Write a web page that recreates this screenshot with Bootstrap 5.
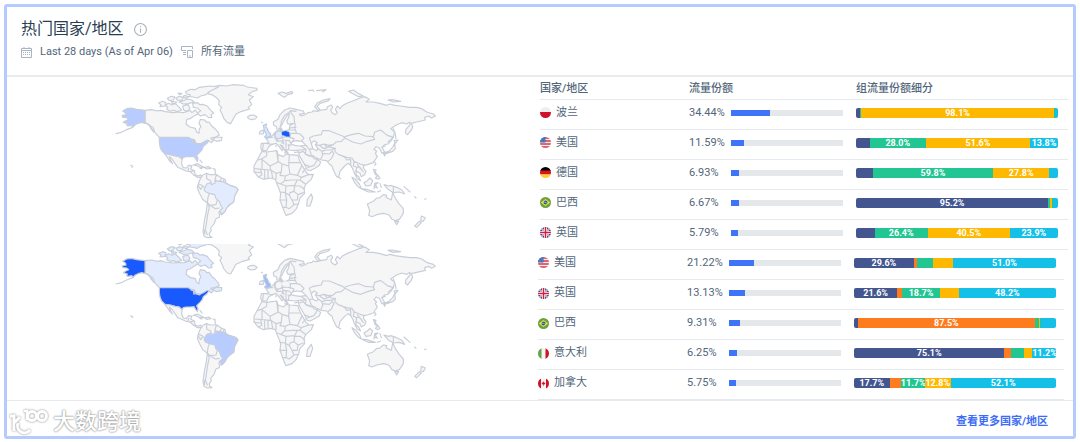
<!DOCTYPE html>
<html lang="zh-CN">
<head>
<meta charset="utf-8">
<meta name="viewport" content="width=device-width, initial-scale=1">
<title>热门国家/地区</title>
<link href="https://cdn.jsdelivr.net/npm/bootstrap@5.3.0/dist/css/bootstrap.min.css" rel="stylesheet">
<style>
  body { font-family: Roboto, "Noto Sans CJK SC", sans-serif; font-size: 11px; line-height: 16px; color: #52667a; background: #fff; }
  .panel { margin: 4px; border: 3px solid #b5cbff; border-radius: 3px; }
  .panel-head { height: 70px; padding: 10px 14px 0; border-bottom: 2px solid #e9ecef; }
  .panel-title { font-size: 16px; line-height: 24px; font-weight: 400; color: #2a3e52; }
  .title-row { gap: 10px; margin-bottom: 3px; }
  .period { gap: 8px; }
  .maps { padding: 1px 0 0 103px; }
  .world { display: block; width: 330px; max-width: 100%; }
  .world-a { --us: #b8ccff; --br: #e3ebff; --de: #dfe9ff; --gb: #dbe6fb; --pl: #195afe; --ca: #f6f6f7; }
  .world-b { --us: #195afe; --br: #b8ccff; --de: #f6f6f7; --gb: #a1b9f5; --pl: #f6f6f7; --ca: #e3ebff; }
  .tables { width: 533px; }
  .share-table { table-layout: fixed; width: 528px; margin: 0; }
  .share-table.compare { width: 526px; margin-left: -2px; }
  .share-table th, .share-table td { padding: 0 0 3px; height: 30px; border-bottom: 1px solid #e6eaee; vertical-align: middle; color: #52667a; }
  .share-table thead th { height: 22px; padding: 2px 0 0; font-weight: 500; }
  .share-table tbody th { font-weight: 400; }
  .col-name { width: 149px; }
  .col-share { width: 167px; }
  .country { gap: 5px; }
  .flag { width: 11px; height: 11px; flex: none; }
  .pct { width: 42px; flex: none; }
  .meter { height: 6px; width: 112px; border-radius: 0; background: #e5e8eb; }
  .meter .progress-bar { background: #3f73f8; }
  .split { height: 10px; width: 202px; border-radius: 2px; font-size: 9px; font-weight: 700; }
  .split .progress-bar { overflow: visible; }
  .c1 { background: #44568f; } .c2 { background: #ff7c1e; } .c3 { background: #22c692; } .c4 { background: #ffb800; } .c5 { background: #14c0e8; }
  .panel-foot { height: 36px; padding: 0 25px 0 1px; border-top: 1px solid #e6eaee; }
  .more { font-weight: 700; color: #3e6df5; text-decoration: none; margin-top: 7px; }
  .brandmark { font-size: 22px; line-height: 28px; font-weight: 500; color: #fff; text-shadow: 0 0 2px #8b8b8b, 0 0 2px #aaa; margin-top: 6px; }
  .brandmark svg { filter: drop-shadow(0 0 1px #888); }
</style>
</head>
<body>
<svg width="0" height="0" class="position-absolute" aria-hidden="true">
  <symbol id="world" viewBox="0 0 990 498">
    <g fill="#f6f6f7" stroke="#c8ced8" stroke-width="3.500" stroke-linejoin="round" stroke-linecap="round">
      <!-- Greenland, Iceland, Arctic -->
      <path d="M283 28 300 28 330 22 350 24 370 20 400 22 412 27 440 31 442 36 425 42 415 50 430 56 418 66 425 80 415 88 419 93 395 100 378 108 370 122 362 137 352 134 342 122 336 108 330 96 335 88 326 80 328 68 318 58 306 50 294 48 298 40 286 36Z M413 116 420 112 432 111 441 117 436 123 424 125 414 121Z"/>
      <g fill="var(--ca)">
        <path d="M226 42 242 34 256 35 268 28 300 24 326 27 312 34 296 42 288 50 272 54 262 60 250 57 238 56 241 50 230 48Z M165 82 176 76 186 81 196 77 206 86 215 96 200 101 192 97 180 99 170 94 173 88Z M146 75 158 70 168 74 165 84 150 86 153 80Z M172 61 184 55 195 57 190 66 178 68Z M198 60 208 55 220 58 216 66 203 67Z M207 72 220 68 232 63 246 66 252 72 235 77 220 78Z M248 76 262 74 270 80 278 79 292 84 300 95 311 105 303 110 306 118 296 119 285 110 272 114 261 106 272 98 262 90 250 88Z M218 84 234 80 240 90 233 100 221 96Z M184 70 200 72 196 77 186 76Z M222 52 236 56 230 61 220 58Z M240 104 254 107 248 113 240 110Z M204 45 216 47 208 50Z"/>
        <path d="M105 97 125 95 142 99 152 97 166 101 190 104 205 102 220 104 232 100 240 97 246 104 256 96 264 107 252 114 240 122 231 124 228 138 240 147 256 151 260 162 267 166 268 153 273 146 267 136 271 124 284 126 290 133 297 132 306 145 315 152 325 164 328 172 316 177 302 180 306 185 318 177 336 178 334 187 320 190 312 186 304 194 297 188 278 196 262 200 254 190 236 180 148 178 140 170 134 162 129 148 120 143 114 138 105 134Z"/>
      </g>
      <!-- United States -->
      <g fill="var(--us)">
        <path d="M148 178H235L243 183 252 184 256 196 270 198 280 193 292 186 297 188 290 197 280 205 276 215 270 222 260 232 264 242 262 250 257 243 252 235 240 236 228 236 220 238 216 244 207 236 195 234 180 230 165 228 155 218 150 206 148 192Z"/>
        <path d="M38 99 50 92 64 90 80 94 105 97V136L96 133 84 136 76 140 68 148 66 142 54 144 50 142 52 137 40 133 47 128 56 124 50 119 39 118 36 113 48 110 47 105Z"/>
        <path fill="none" d="M68 148 50 155 34 163 18 167M105 134 118 142 123 152 132 163M114 140 122 147 130 158M62 262 68 265 66 268"/>
        <path stroke-width="5" d="M243 184 255 188M252 197 251 188M261 197 269 199"/>
      </g>
      <!-- Mexico, Central America, Caribbean -->
      <path d="M165 228 180 230 195 234 207 236 216 244 215 258 220 269 230 270 236 262 246 263 242 272 252 278 256 290 265 294 272 290 276 298 262 298 250 290 240 281 228 279 215 273 203 268 195 256 185 242 178 236 182 248 188 257 180 250 172 238Z M236 271 234 279M242 280 254 278 M250 261 262 257 275 264 284 268 270 268 258 262Z M284 269 296 266 303 271 290 273Z M270 246 276 254M270 271 276 272M309 272 315 273 316 288"/>
      <!-- South America -->
      <path d="M272 300 280 290 290 286 300 290 320 290 335 300 345 304 348 316 360 322 378 328 384 335 374 354 371 372 360 380 350 390 345 400 336 410 329 408 328 418 318 422 312 438 302 450 304 458 298 466 299 474 306 478 292 479 282 474 279 460 283 430 289 400 292 375 278 364 268 345 262 330 266 314Z"/>
      <path fill="none" d="M290 286 290 302 302 308 304 316M266 318 276 322 284 329M264 322 272 334 278 324M298 346 294 358 292 374 300 382 318 380 322 366M292 375 298 388 293 410 289 438 286 456 292 470M300 382 316 392 328 390M326 406 329 400M320 290 315 302 320 312M335 301 329 310M342 304 340 313M283 456 284 468"/>
      <path fill="var(--br)" d="M290 318 302 314 304 320 316 314 314 308 330 310 342 312 348 316 360 322 378 328 384 335 374 354 371 372 358 380 350 390 345 400 336 408 328 400 338 390 332 382 328 370 318 362 314 350 298 346 286 341 282 334Z"/>
      <g transform="translate(420)">
        <!-- Eurasia -->
        <path d="M80 146 71 142 70 132 84 124 90 110 104 96 120 90 138 94 160 99 163 106 148 109 154 114 164 110 174 104 186 102 190 98 200 100 215 96 230 94 232 86 244 81 248 88 242 96 246 104 256 110 262 104 256 94 262 84 270 92 276 84 290 76 310 68 330 60 345 56 358 64 348 72 370 72 390 76 410 82 420 78 435 82 450 84 480 88 500 88 515 92 530 102 550 108 556 114 545 120 536 114 524 118 526 126 500 132 484 136 488 146 484 156 472 170 466 164 468 154 480 140 480 132 470 138 455 134 440 140 422 152 434 162 430 178 422 190 414 198 404 200 396 208 404 222 396 226 388 210 378 206 372 214 380 220 376 226 382 236 370 254 352 260 342 262 340 270 348 280 344 290 334 296 330 286 318 280 318 290 326 296 332 308 322 302 314 288 308 272 302 262 294 256 284 264 270 280 266 298 260 296 250 276 246 264 238 258 230 248 214 246 200 240 186 232 192 242 202 244 212 252 208 262 196 270 180 278 172 276 164 260 150 236 144 222 147 216 134 218 116 216 106 214 114 224 104 218 98 204 90 200 100 212 96 218 88 206 78 196 66 199 56 206 50 218 36 218 32 210 34 196 50 196 56 192 48 182 60 178 72 168 76 162 82 160 80 150Z"/>
        <!-- seas -->
        <path fill="#fff" d="M92 156 90 146 96 140 104 124 112 112 118 106 116 118 110 130 114 138 134 136 120 142 118 154 104 160Z M86 152 94 150 98 160 90 158Z M122 198 128 190 140 188 156 190 168 202 150 204 134 202Z M184 196 192 188 202 194 196 200 204 212 200 218 190 214 186 204Z"/>
        <!-- borders -->
        <path fill="none" d="M92 146 94 130 104 112 116 104 122 98 138 100M122 98 124 106 132 116 134 134M118 150 138 148M116 156 134 156M136 138 134 150 140 166 122 166M140 166 150 168 162 180 154 190M122 166 120 178 132 182 128 192M72 168 76 182 82 190M76 162 75 172 84 182 96 178 112 176 122 180M84 182 80 190 98 188 102 198M96 178 100 186 118 188 122 194M60 178 68 178M50 196 68 200M40 198 38 216M98 188 96 196M108 188 108 210M114 200 122 202M116 202 116 214"/>
        <path fill="none" d="M184 196 178 180 190 174 214 170 218 158 238 158 262 168 278 174 285 180 274 190 258 192 250 200 236 202 222 198 208 202 196 200M285 176 304 170 326 166 345 174 370 176 374 184 352 190 332 198 308 192 285 180M370 176 374 162 392 156 412 172 430 178 414 192M250 200 236 206 256 212 254 220 266 230 290 238 306 240 312 250 330 258 344 262M204 212 216 220 218 232 212 244M216 220 228 216 246 216 256 210M218 226 238 228 246 220 252 226 244 242 234 250M168 202 178 214 188 212M168 214 166 228 184 234M178 214 184 230M152 204 168 214 150 216M148 224 160 220 168 230 184 236M174 268 192 262 202 246M164 260 176 264M286 240 290 246 302 244 302 260M312 250 310 264 320 268 318 280M322 260 332 272 340 282M322 268 328 266 336 276M396 208 406 204M208 202 222 212 238 206M222 198 232 208M270 230 288 240"/>
        <!-- Africa -->
        <path d="M36 220 50 222 80 218 84 230 100 236 108 228 120 230 144 232 148 246 156 262 168 282 176 290 190 289 184 304 168 318 162 330 164 346 150 360 146 376 138 394 126 406 108 412 104 404 98 388 90 366 92 346 86 330 80 316 76 304 62 300 40 304 24 296 12 280 12 264 22 246 30 230Z"/>
        <path fill="none" d="M50 222 50 234 32 244 22 246M36 244 60 264 84 252 80 218M84 230 84 250 96 258 116 264 118 230M116 254 148 254M36 244 36 274 14 272M36 274 62 276 60 264M62 276 78 286 94 282 96 258M94 282 90 292 106 294 120 288 116 264M120 288 142 292 156 262M142 292 154 298 176 290M154 298 150 306 166 318M106 294 104 308 92 318 82 314M150 306 142 306 126 306 104 308M92 318 108 324 106 344 90 342M108 324 134 322 142 306M134 322 132 340 120 344 118 352 106 344M132 324 150 324 164 334M132 340 144 350 142 366 126 366 118 352M106 344 110 366 90 366M110 366 108 388 98 388M108 388 118 392 132 380 126 366M132 380 146 378M144 350 160 344M78 286 78 304M44 278 44 302M54 278 54 300M32 276 36 290 26 296M64 278 68 300M166 272 158 284M12 282 32 284"/>
        <path d="M184 348 188 360 180 384 170 384 172 364Z"/>
        <!-- islands and Oceania -->
        <path d="M352 378 370 370 380 360 388 360 400 350 410 352 408 358 424 366 428 344 436 360 446 376 460 392 460 406 448 424 436 428 426 424 418 412 410 408 400 406 380 410 366 416 356 412 359 398Z M434 430 446 430 440 440Z M514 414 526 419 520 430 512 428Z M508 430 514 434 500 448 494 444Z M306 298 316 304 328 318 334 332 324 326 314 314Z M334 332 350 334 376 342 355 342Z M342 314 352 308 360 300 368 308 362 322 348 324Z M374 316 384 314 376 320 382 330 374 326 372 332Z M402 320 416 324 422 322 440 328 456 336 464 348 448 342 430 344 414 334Z M430 326 430 344M370 274 378 276 376 284 384 292 376 290Z M376 300 384 292 390 300 384 304Z M432 188 444 186 436 196Z M434 196 436 212 428 220 410 226 404 224 416 220 428 208Z M400 226 406 228 404 234Z M430 152 436 168 438 182M374 252 378 258 374 262M266 298 272 302 M462 326 480 342M494 356 498 360M524 364 528 362M390 316 394 328M382 342 392 338"/>
        <path d="M84 46 96 42 108 46 126 40 128 46 112 50 104 58 96 54Z M176 38 188 36 192 40M200 38 228 35 218 42M240 62 220 66 203 74 194 86 204 98 210 94 201 86 210 76 236 68Z M296 40 310 36 324 46 340 54 326 56 310 48Z M414 66 426 65 452 70 430 72Z M34 132 38 134M30 160 40 156 40 168 28 168Z M78 202V206M104 224 114 226M134 224 142 222"/>
        <path fill="var(--gb)" stroke="#b9c9e6" d="M40 142 50 138 47 146 52 152 56 162 62 168 60 176 46 179 44 176 50 170 44 160Z"/>
        <path fill="var(--de)" d="M76 164 86 158 96 161 98 172 92 181 80 182 75 174Z"/>
        <path fill="var(--pl)" stroke-width="1" d="M95 162 106 158 118 162 120 176 110 176 96 171Z"/>
      </g>
    </g>
  </symbol>
  <clipPath id="disc"><circle cx="11" cy="11" r="11"/></clipPath>
  <symbol id="pl" viewBox="0 0 22 22"><g clip-path="url(#disc)"><path fill="#eee" d="M0 0h22v11H0z"/><path fill="#d0112b" d="M0 10h22v12H0z"/></g></symbol>
  <symbol id="us" viewBox="0 0 22 22"><g clip-path="url(#disc)"><path fill="#f3edf0" d="M0 0h22v22H0z"/><path stroke="#d5374b" stroke-width="3" d="M0 2h22M0 8h22M0 14h22M0 20h22"/><path fill="#3a6fb5" d="M0 0h11v11H0z"/><path stroke="#c9daf0" stroke-dasharray="1 2" d="M3 4h8M2 8h9"/></g></symbol>
  <symbol id="de" viewBox="0 0 22 22"><g clip-path="url(#disc)"><path d="M0 0h22v8H0z"/><path fill="#d8131a" d="M0 7h22v8H0z"/><path fill="#ffd02c" d="M0 15h22v7H0z"/></g></symbol>
  <symbol id="br" viewBox="0 0 22 22"><circle cx="11" cy="11" r="11" fill="#6aa33d"/><path fill="#f6e04b" d="m2 11 9-7 9 7-9 7z"/><circle cx="11" cy="11" r="4" fill="#28588f"/><path stroke="#fff" fill="none" d="M7 10q4 0 8 3"/></symbol>
  <symbol id="gb" viewBox="0 0 22 22"><g clip-path="url(#disc)"><path fill="#3c4f93" d="M0 0h22v22H0z"/><path stroke="#fff" stroke-width="3" d="m2 2 18 18M20 2 2 20"/><path stroke="#d22d45" stroke-width="1" d="m2 2 18 18M20 2 2 20"/><path stroke="#fff" stroke-width="6" d="M11 0v22M0 11h22"/><path stroke="#d2203c" stroke-width="3" d="M11 0v22M0 11h22"/></g></symbol>
  <symbol id="it" viewBox="0 0 22 22"><g clip-path="url(#disc)"><path fill="#f4f4f4" d="M0 0h22v22H0z"/><path fill="#5fa447" d="M0 0h7v22H0z"/><path fill="#d0112b" d="M15 0h7v22h-7z"/></g></symbol>
  <symbol id="ca" viewBox="0 0 22 22"><g clip-path="url(#disc)"><path fill="#f8f4f4" d="M0 0h22v22H0z"/><path fill="#d0112b" d="M0 0h6v22H0zM16 0h6v22h-6zM11 6l1 3 3 1-2 3h-1.500v3h-1v-3H9L7 10l3-1z"/></g></symbol>
</svg>

<main class="panel">
  <header class="panel-head">
    <div class="d-flex align-items-center title-row">
      <h1 class="panel-title m-0">热门国家/地区</h1>
      <svg width="13" height="13" viewBox="0 0 12 12" fill="none" stroke="#a8afb8" aria-label="info"><circle cx="6" cy="6" r="5.500"/><path d="M6 5v4M6 3v1"/></svg>
    </div>
    <div class="d-flex align-items-center period">
      <svg width="11" height="11" viewBox="0 0 11 11" fill="none" stroke="#a9b5c4"><path d="M.5 1.500h10v9H.5zM.5 3.500h10M3 0v2M8 0v2"/><path stroke-dasharray="1 1" d="M2 5.500h7M2 7.500h7"/></svg>
      <span>Last 28 days (As of Apr 06)</span>
      <svg width="12" height="12" viewBox="0 0 12 12" fill="none" stroke="#a9b5c4"><path d="M11.500 3V.5H.5v4H5M2 6.500h3M2 8.500h3M6.500 11.500v-7h5v7zM8 10h2"/></svg>
      <span>所有流量</span>
    </div>
  </header>

  <section class="d-flex justify-content-between flex-wrap">
    <div class="maps">
      <svg class="world world-a" viewBox="0 0 990 498" role="img" aria-label="国家/地区地图"><use href="#world" width="990" height="498"/></svg>
      <svg class="world world-b" viewBox="0 47 990 448" role="img" aria-label="国家/地区地图"><use href="#world" width="990" height="498"/></svg>
    </div>
    <div class="tables">
      <table class="table share-table">
        <colgroup><col class="col-name"><col class="col-share"><col></colgroup>
        <thead><tr><th scope="col">国家/地区</th><th scope="col">流量份额</th><th scope="col">组流量份额细分</th></tr></thead>
        <tbody id="rows-a"></tbody>
      </table>
      <table class="table share-table compare">
        <colgroup><col class="col-name"><col class="col-share"><col></colgroup>
        <tbody id="rows-b"></tbody>
      </table>
    </div>
  </section>

  <footer class="panel-foot d-flex justify-content-between align-items-center">
    <div class="brandmark d-flex align-items-center">
      <svg width="41" height="28" viewBox="0 0 41 28" fill="none" stroke="#fff" stroke-width="3" class="me-1"><path d="M2 8h4v15M6 15l6-6M10 15a7 7 0 0 0 12 7"/><path stroke-width="2.500" d="M16 3h3v9"/><circle cx="24" cy="8" r="4.500"/><circle cx="34" cy="8" r="4.500"/></svg>
      <span>大数跨境</span>
    </div>
    <a class="more" href="#">查看更多国家/地区</a>
  </footer>
</main>

<script src="https://cdn.jsdelivr.net/npm/bootstrap@5.3.0/dist/js/bootstrap.bundle.min.js"></script>
<script>
  // each split part: [colour index, width in percent, label]
  const first = [
    ['pl', '波兰', '34.44', [[1, 2], [3, .6], [4, 95.4, '98.1%'], [3, .4], [5, 1.6]]],
    ['us', '美国', '11.59', [[1, 6.8], [3, 27.8, '28.0%'], [4, 51.6, '51.6%'], [5, 13.8, '13.8%']]],
    ['de', '德国', '6.93', [[1, 8.2], [3, 59.8, '59.8%'], [4, 27.6, '27.8%'], [5, 4.4]]],
    ['br', '巴西', '6.67', [[1, 95.2, '95.2%'], [3, 1], [4, .6], [3, .6], [5, 2.6]]],
    ['gb', '英国', '5.79', [[1, 9.2], [3, 26.4, '26.4%'], [4, 40.5, '40.5%'], [5, 23.9, '23.9%']]]
  ];
  const second = [
    ['us', '美国', '21.22', [[1, 29.6, '29.6%'], [2, 1.4], [3, 8.1], [4, 9.9], [5, 51, '51.0%']]],
    ['gb', '英国', '13.13', [[1, 21.4, '21.6%'], [2, 2.5], [3, 18.6, '18.7%'], [4, 9.4], [5, 48.1, '48.2%']]],
    ['br', '巴西', '9.31', [[1, 2], [2, 87.5, '87.5%'], [3, 2], [4, .5], [3, .5], [5, 7.5]]],
    ['it', '意大利', '6.25', [[1, 74.5, '75.1%'], [2, 3.3], [3, 6.2], [4, 4.2], [5, 11.8, '11.2%']]],
    ['ca', '加拿大', '5.75', [[1, 17.6, '17.7%'], [2, 5.6], [3, 12, '11.7%'], [4, 12.6, '12.8%'], [5, 52.2, '52.1%']]]
  ];
  const row = ([flag, name, share, parts]) => `<tr>
    <th scope="row"><div class="d-flex align-items-center country"><svg class="flag" aria-hidden="true"><use href="#${flag}"/></svg><span>${name}</span></div></th>
    <td><div class="d-flex align-items-center"><span class="pct">${share}%</span><div class="progress meter"><div class="progress-bar" style="width:${Math.ceil(share)}%"></div></div></div></td>
    <td><div class="progress split">${parts.map(([c, w, t]) => `<div class="progress-bar c${c}" style="width:${w}%">${t || ''}</div>`).join('')}</div></td></tr>`;
  document.getElementById('rows-a').innerHTML = first.map(row).join('');
  document.getElementById('rows-b').innerHTML = second.map(row).join('');
</script>
</body>
</html>
